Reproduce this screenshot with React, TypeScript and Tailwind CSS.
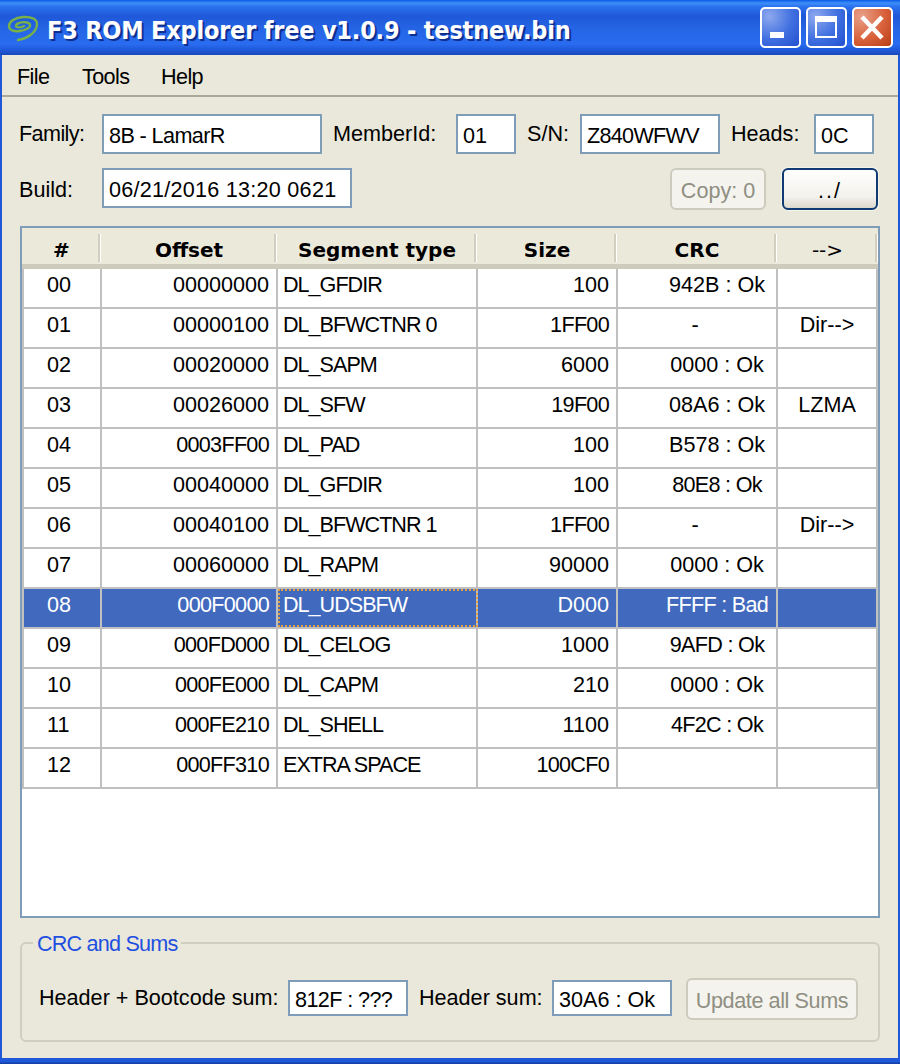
const FONT = "font-['Liberation_Sans',Arial,sans-serif]"

const rows = [
  ["00", "00000000", "DL_GFDIR", "100", "942B : Ok", ""],
  ["01", "00000100", "DL_BFWCTNR 0", "1FF00", "-", "Dir-->"],
  ["02", "00020000", "DL_SAPM", "6000", "0000 : Ok", ""],
  ["03", "00026000", "DL_SFW", "19F00", "08A6 : Ok", "LZMA"],
  ["04", "0003FF00", "DL_PAD", "100", "B578 : Ok", ""],
  ["05", "00040000", "DL_GFDIR", "100", "80E8 : Ok", ""],
  ["06", "00040100", "DL_BFWCTNR 1", "1FF00", "-", "Dir-->"],
  ["07", "00060000", "DL_RAPM", "90000", "0000 : Ok", ""],
  ["08", "000F0000", "DL_UDSBFW", "D000", "FFFF : Bad", ""],
  ["09", "000FD000", "DL_CELOG", "1000", "9AFD : Ok", ""],
  ["10", "000FE000", "DL_CAPM", "210", "0000 : Ok", ""],
  ["11", "000FE210", "DL_SHELL", "1100", "4F2C : Ok", ""],
  ["12", "000FF310", "EXTRA SPACE", "100CF0", "", ""],
]

const headers = [
  { label: "#", width: "w-[79px]" },
  { label: "Offset", width: "w-[176px]" },
  { label: "Segment type", width: "w-[200px]" },
  { label: "Size", width: "w-[140px]" },
  { label: "CRC", width: "w-[160px]" },
  { label: "-->", width: "w-[101px]" },
]

// hex values holding F or E come out wider than the reference's font
function hexTracking(value: string) {
  return /[FE]/.test(value) ? "tracking-[-0.7px]" : ""
}

function Field({ value, width, height = "h-[40px]", tracking = "" }: { value: string; width: string; height?: string; tracking?: string }) {
  return (
    <div className={`${width} ${height} ${tracking} shrink-0 border-2 border-[#7f9db9] bg-white pl-[5px] flex items-center text-[21.6px] text-black pt-[5px]`}>
      {value}
    </div>
  )
}

function DisabledButton({ label, className }: { label: string; className: string }) {
  return (
    <div className={`${className} shrink-0 rounded-[6px] border-2 border-[#cdcbbd] bg-[#f4f3ee] pt-[4px] flex items-center justify-center text-[21.6px] text-[#8f8f82]`}>
      {label}
    </div>
  )
}

function TitleBar() {
  return (
    <div className="h-[55px] shrink-0 flex items-center bg-[linear-gradient(180deg,#0a5ae6_0px,#3d8ef8_3px,#2a70ee_7px,#1f58d8_16px,#2566e6_30px,#2a6cf0_44px,#1f58da_50px,#1a48b8_55px)]">
      <svg className="ml-[7px] mt-[2px] shrink-0" width="32" height="28" viewBox="0 0 32 28" fill="none" stroke="#78b04a" strokeWidth="2.4" strokeLinecap="round">
        <path d="M11 25 C19 24 30 18 30 9 C30 4 24 1.5 16 2 C8 2.5 2 6.5 2 11 C2 15 7 17 13 16 C19 15 24 12.5 23 9.5 C22 7 16 6.5 12 8 C9 9 8 11 10 12 C12 12.8 15 12 17 11" />
      </svg>
      <div className="ml-[8px] mt-[7px] font-['DejaVu_Sans_Condensed','DejaVu_Sans',sans-serif] font-bold text-[25px] text-white whitespace-nowrap tracking-[-0.2px] [text-shadow:2px_2px_0_#0f2f8f]">
        F3 ROM Explorer free v1.0.9 - testnew.bin
      </div>
      <div className="ml-auto mr-[7px] flex gap-[5px]">
        <div className="w-[41px] h-[41px] rounded-[5px] border-2 border-white bg-[radial-gradient(circle_at_20%_20%,#8da8ee_0%,#3f6fe0_55%,#2350d0_100%)]">
          <svg width="37" height="37" viewBox="0 0 37 37"><rect x="8" y="23" width="14" height="6" fill="white" /></svg>
        </div>
        <div className="w-[41px] h-[41px] rounded-[5px] border-2 border-white bg-[radial-gradient(circle_at_20%_20%,#8da8ee_0%,#3f6fe0_55%,#2350d0_100%)]">
          <svg width="37" height="37" viewBox="0 0 37 37" fill="none" stroke="white">
            <rect x="8" y="8" width="20" height="20" strokeWidth="2" />
            <rect x="8" y="7" width="21" height="6" fill="white" stroke="none" />
          </svg>
        </div>
        <div className="w-[41px] h-[41px] rounded-[5px] border-2 border-white bg-[radial-gradient(circle_at_20%_20%,#e8a088_0%,#d9623c_55%,#b83d14_100%)]">
          <svg width="37" height="37" viewBox="0 0 37 37" stroke="white" strokeWidth="4.5">
            <path d="M8 8 L28 29 M28 8 L8 29" />
          </svg>
        </div>
      </div>
    </div>
  )
}

function SegmentTable() {
  return (
    <div className="mt-[14px] h-[692px] shrink-0 border-2 border-[#7f9db9] bg-white flex flex-col">
      <div className="h-[41px] shrink-0 flex bg-[#ebe9da] border-b-[5px] border-[#cfcbbc] font-['DejaVu_Sans',sans-serif] font-bold text-[20px] text-black">
        {headers.map((h) => (
          <div key={h.label} className={`${h.width} pt-[8px] shrink-0 relative flex items-center justify-center ${h.label === "-->" ? "font-normal" : ""}`}>
            {h.label}
            <span className="absolute right-0 top-[6px] h-[28px] w-[3px] bg-[#d2cfc1] border-r border-white" />
          </div>
        ))}
      </div>
      <div className="flex flex-col">
        {rows.map((r) => {
          const selected = r[0] === "08"
          const cell = "h-[38px] leading-[32px] shrink-0 border-r-2 border-[#c0c0c0] whitespace-nowrap"
          return (
            <div key={r[0]} className={`h-[40px] flex border-b-2 border-l-2 border-[#c0c0c0] text-[21.6px] ${selected ? "bg-[#4169be] text-white" : "bg-white text-black"}`}>
              <div className={`${cell} w-[78px] pl-[23px]`}>{r[0]}</div>
              <div className={`${cell} w-[176px] pr-[7px] text-right ${hexTracking(r[1])}`}>{r[1]}</div>
              <div className={`${cell} w-[200px] pl-[5px] tracking-[-1px] ${selected ? "outline-2 outline-dotted outline-[#e0a040] -outline-offset-2" : ""}`}>{r[2]}</div>
              <div className={`${cell} w-[140px] pr-[7px] text-right ${hexTracking(r[3])}`}>{r[3]}</div>
              <div className={`${cell} w-[160px] text-center ${r[4] === "-" ? "pr-[4px]" : "pl-[40px]"} ${hexTracking(r[4])}`}>{r[4]}</div>
              <div className={`${cell} w-[100px] text-center`}>{r[5]}</div>
            </div>
          )
        })}
      </div>
    </div>
  )
}

export default function App() {
  return (
    <div className={`${FONT} w-[900px] h-[1064px] flex flex-col bg-[#1f58d8] overflow-hidden`}>
      <TitleBar />
      <div className="flex-1 mx-[2px] bg-[#eae8da] flex flex-col text-black text-[21.6px]">
        <div className="h-[42px] shrink-0 border-b-2 border-[#aca899] flex items-center pl-[15px] pt-[4px] tracking-[-0.6px]">
          <span className="w-[65px]">File</span>
          <span className="w-[79px]">Tools</span>
          <span>Help</span>
        </div>
        <div className="px-[18px] flex flex-col">
          <div className="mt-[17px] flex items-center">
            <span className="w-[82px] -ml-[1px] mr-[1px] tracking-[-0.6px]">Family:</span>
            <Field value="8B - LamarR" width="w-[220px]" tracking="tracking-[-0.6px]" />
            <span className="w-[134px] pl-[11px]">MemberId:</span>
            <Field value="01" width="w-[60px]" />
            <span className="w-[64px] pl-[11px]">S/N:</span>
            <Field value="Z840WFWV" width="w-[140px]" tracking="tracking-[-0.7px]" />
            <span className="w-[94px] pl-[11px]">Heads:</span>
            <Field value="0C" width="w-[60px]" />
          </div>
          <div className="mt-[14px] flex items-start">
            <span className="w-[82px] -ml-[1px] mr-[1px] leading-[44px]">Build:</span>
            <Field value="06/21/2016 13:20 0621" width="w-[250px]" tracking="tracking-[0.25px]" />
            <DisabledButton label="Copy: 0" className="ml-auto w-[96px] h-[42px]" />
            <div className="ml-[16px] mr-[2px] w-[96px] h-[42px] pt-[4px] shrink-0 rounded-[6px] border-2 border-[#0f3a72] bg-[linear-gradient(180deg,#ffffff,#f3f2ec_70%,#dcd8cc)] flex items-center justify-center text-[21.6px] tracking-[2px] shadow-[0_0_0_1px_#f4f3ec]">
              ../
            </div>
          </div>
          <SegmentTable />
          <div className="relative mt-[24px] h-[100px] shrink-0 rounded-[6px] border-2 border-[#d0cebf] flex items-start pl-[17px] pt-[36px]">
            <span className="absolute left-[11px] -top-[16px] bg-[#eae8da] px-[4px] text-[#1f50e0] tracking-[-0.8px]">CRC and Sums</span>
            <span className="w-[249px] leading-[36px]">Header + Bootcode sum:</span>
            <Field value="812F : ???" width="w-[120px]" height="h-[36px]" tracking="tracking-[-0.6px]" />
            <span className="w-[144px] pl-[11px] leading-[36px]">Header sum:</span>
            <Field value="30A6 : Ok" width="w-[120px]" height="h-[36px]" />
            <DisabledButton label="Update all Sums" className="ml-[14px] -mt-[2px] w-[172px] h-[42px] tracking-[-0.4px]" />
          </div>
        </div>
      </div>
      <div className="h-[6px] shrink-0 bg-[linear-gradient(180deg,#1f58d8_60%,#123a9c)]" />
    </div>
  )
}
